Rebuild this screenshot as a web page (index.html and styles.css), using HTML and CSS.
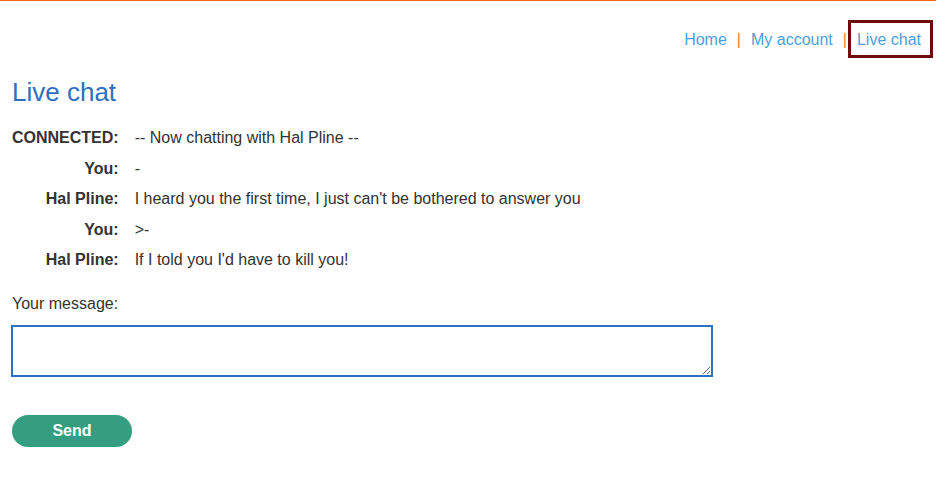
FILE: index.html
```html
<!DOCTYPE html>
<html>
<head>
<meta charset="utf-8">
<link rel="stylesheet" href="styles.css">
</head>
<body>
<div class="topline"></div>
<div class="page">
  <nav class="nav">
    <a class="navlink" href="#">Home</a>
    <span class="sep">|</span>
    <a class="navlink" href="#">My account</a>
    <span class="sep">|</span>
    <a class="navlink current" href="#">Live chat</a>
  </nav>
  <h1 class="title">Live chat</h1>
  <table class="chat">
    <tr><th>CONNECTED:</th><td>-- Now chatting with Hal Pline --</td></tr>
    <tr><th>You:</th><td>-</td></tr>
    <tr><th>Hal Pline:</th><td>I heard you the first time, I just can't be bothered to answer you</td></tr>
    <tr><th>You:</th><td>&gt;-</td></tr>
    <tr><th>Hal Pline:</th><td>If I told you I'd have to kill you!</td></tr>
  </table>
  <form class="form">
    <label class="label">Your message:</label>
    <textarea class="msg" autofocus></textarea>
    <button class="send" type="button">Send</button>
  </form>
</div>
</body>
</html>
```
FILE: styles.css
```css
html, body {
  margin: 0;
  padding: 0;
  background: #fff;
}
body {
  font-family: "Liberation Sans", Arial, sans-serif;
  font-size: 16px;
  color: #333332;
}
.topline {
  height: 1px;
  background: #f4641e;
}
.page {
  padding: 0 12px;
}
.nav {
  display: flex;
  justify-content: flex-end;
  align-items: center;
  padding-top: 19px;
  height: 38px;
  margin-right: -9px;
}
.navlink {
  color: #4a9fe4;
  text-decoration: none;
  line-height: 18px;
  padding-top: 2px;
}
.sep {
  color: #d9882c;
  margin: 0 10px;
  padding-top: 2px;
}
.current {
  border: 3px solid #6e0b0b;
  padding: 8px 9px 6px 6px;
  margin-left: -9px;
}
.title {
  font-size: 26px;
  font-weight: normal;
  color: #2f6fbf;
  margin: 19px 0 0;
  line-height: 30px;
}
.chat {
  border-collapse: collapse;
  margin-top: 16px;
}
.chat th {
  text-align: right;
  font-weight: bold;
  padding: 6px 16px 6px 0;
  line-height: 18.5px;
  white-space: nowrap;
}
.chat td {
  padding: 6px 0;
  line-height: 18.5px;
}
.form {
  display: flex;
  flex-direction: column;
  align-items: flex-start;
  margin-top: 19px;
}
.label {
  line-height: 18px;
}
.msg {
  box-sizing: border-box;
  width: 702px;
  height: 52px;
  margin: 12px 0 0 -1px;
  border: 2px solid #2a71c4;
  outline: none;
  font-family: inherit;
  font-size: 16px;
  padding: 4px 6px;
}
.send {
  margin-top: 38px;
  width: 120px;
  height: 32px;
  border: none;
  border-radius: 16px;
  background: #369e80;
  color: #fff;
  font-family: inherit;
  font-weight: bold;
  font-size: 16px;
}
```
